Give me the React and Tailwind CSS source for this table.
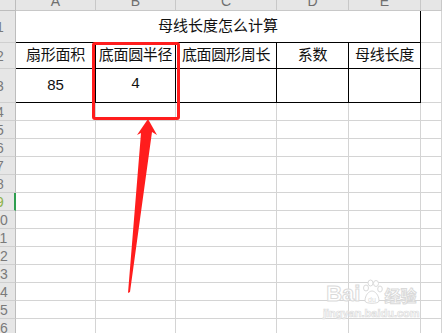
const columns = ['A', 'B', 'C', 'D', 'E', ''];
const headers = ['扇形面积', '底面圆半径', '底面圆形周长', '系数', '母线长度'];
const emptyRows = [4, 5, 6, 7, 8, 9, 10, 11, 12, 13, 14, 15, 16, 17];

function RowHead({ n, active }) {
  return (
    <div
      className={`flex items-center overflow-hidden border-b border-r bg-[#e6e6e6] ${
        active ? 'border-b-[#cfcfcf] border-r-2 border-r-[#2e9e4f]' : 'border-[#cfcfcf] border-r-[#bdbdbd]'
      }`}
    >
      <span
        className={`-ml-[15px] w-[30px] shrink-0 text-center text-[14px] leading-none ${
          active ? 'text-[#8db24a]' : 'text-[#7a7a7a]'
        }`}
      >
        {n}
      </span>
    </div>
  );
}

function Cell({ children, className = '' }) {
  return (
    <div className={`flex items-center justify-center border-b border-r border-[#d4d4d4] ${className}`}>
      {children}
    </div>
  );
}

export default function App() {
  return (
    <div
      className="relative h-[333px] w-[442px] overflow-hidden bg-white"
      style={{ fontFamily: '"Liberation Sans", "Noto Sans CJK SC", sans-serif' }}
    >
      <div className="grid grid-cols-[16px_80px_80px_101px_72px_72px_21px] grid-rows-[11px_32px_26px_34px_repeat(14,18px)]">
        {/* column headers */}
        <div className="border-b border-r border-[#bdbdbd] bg-[#e6e6e6]" />
        {columns.map((c, i) => (
          <div key={i} className="flex justify-center overflow-hidden border-b border-r border-[#c8c8c8] bg-[#e6e6e6]">
            <span className="-mt-[6px] text-[14px] leading-none text-[#6f6f6f]">{c}</span>
          </div>
        ))}

        {/* row 1: merged title */}
        <RowHead n={1} />
        <div className="col-span-5 flex items-center justify-center border-b border-r border-black pb-px text-[15px] text-[#111]">
          母线长度怎么计算
        </div>
        <Cell />

        {/* row 2: headers */}
        <RowHead n={2} />
        {headers.map((h) => (
          <div
            key={h}
            className="flex items-center justify-center overflow-visible whitespace-nowrap border-b border-r border-black text-[15px] tracking-[-0.3px] text-[#111]"
          >
            {h}
          </div>
        ))}
        <Cell />

        {/* row 3: values */}
        <RowHead n={3} />
        <div className="flex items-center justify-center border-b border-r border-black text-[15px] text-[#111]">85</div>
        <div className="flex items-center justify-center border-b border-r border-black font-['Liberation_Mono'] text-[15px] text-[#111]">
          4
        </div>
        <div className="border-b border-r border-black" />
        <div className="border-b border-r border-black" />
        <div className="border-b border-r border-black" />
        <Cell />

        {emptyRows.map((n) => (
          <div key={n} className="contents">
            <RowHead n={n} active={n === 9} />
            <Cell />
            <Cell />
            <Cell />
            <Cell />
            <Cell />
            <Cell />
          </div>
        ))}
      </div>

      {/* red highlight and arrow */}
      <svg className="absolute left-0 top-0" width="442" height="333" viewBox="0 0 442 333">
        <rect x="93.5" y="43.5" width="85" height="75" rx="1.5" fill="none" stroke="#ff1d1d" strokeWidth="3" />
        <polygon points="148,119 157,135 152,132 130,292 128,293 141,133 137,135" fill="#ff1d1d" />
      </svg>

      {/* baidu watermark */}
      <div className="absolute left-[323px] top-[279px] flex flex-col items-center">
        <div className="flex items-end">
          <span className="text-[22px] font-bold leading-none text-white [-webkit-text-stroke:1px_#dadada]">Bai</span>
          <svg width="22" height="26" viewBox="0 0 22 26" className="mx-[1px]">
            <g fill="white" stroke="#dadada" strokeWidth="1">
              <ellipse cx="5" cy="9" rx="2.5" ry="3" />
              <ellipse cx="9.5" cy="4" rx="2.5" ry="3" />
              <ellipse cx="15" cy="4.5" rx="2.5" ry="3" />
              <ellipse cx="19" cy="10" rx="2.3" ry="3" />
              <path d="M4 22 C4 16 8 12 11 12 C14 12 18 16 18 22 C18 25 4 25 4 22 Z" />
            </g>
            <text x="11" y="23" textAnchor="middle" fontSize="7" fill="#dadada" fontFamily="Liberation Sans, sans-serif">
              du
            </text>
          </svg>
          <span className="text-[16px] font-bold leading-none text-white [-webkit-text-stroke:1px_#dadada]">经验</span>
        </div>
        <span className="mt-[3px] text-[11px] font-bold leading-none text-white [-webkit-text-stroke:0.7px_#dcdcdc]">
          jingyan.baidu.com
        </span>
      </div>
    </div>
  );
}
